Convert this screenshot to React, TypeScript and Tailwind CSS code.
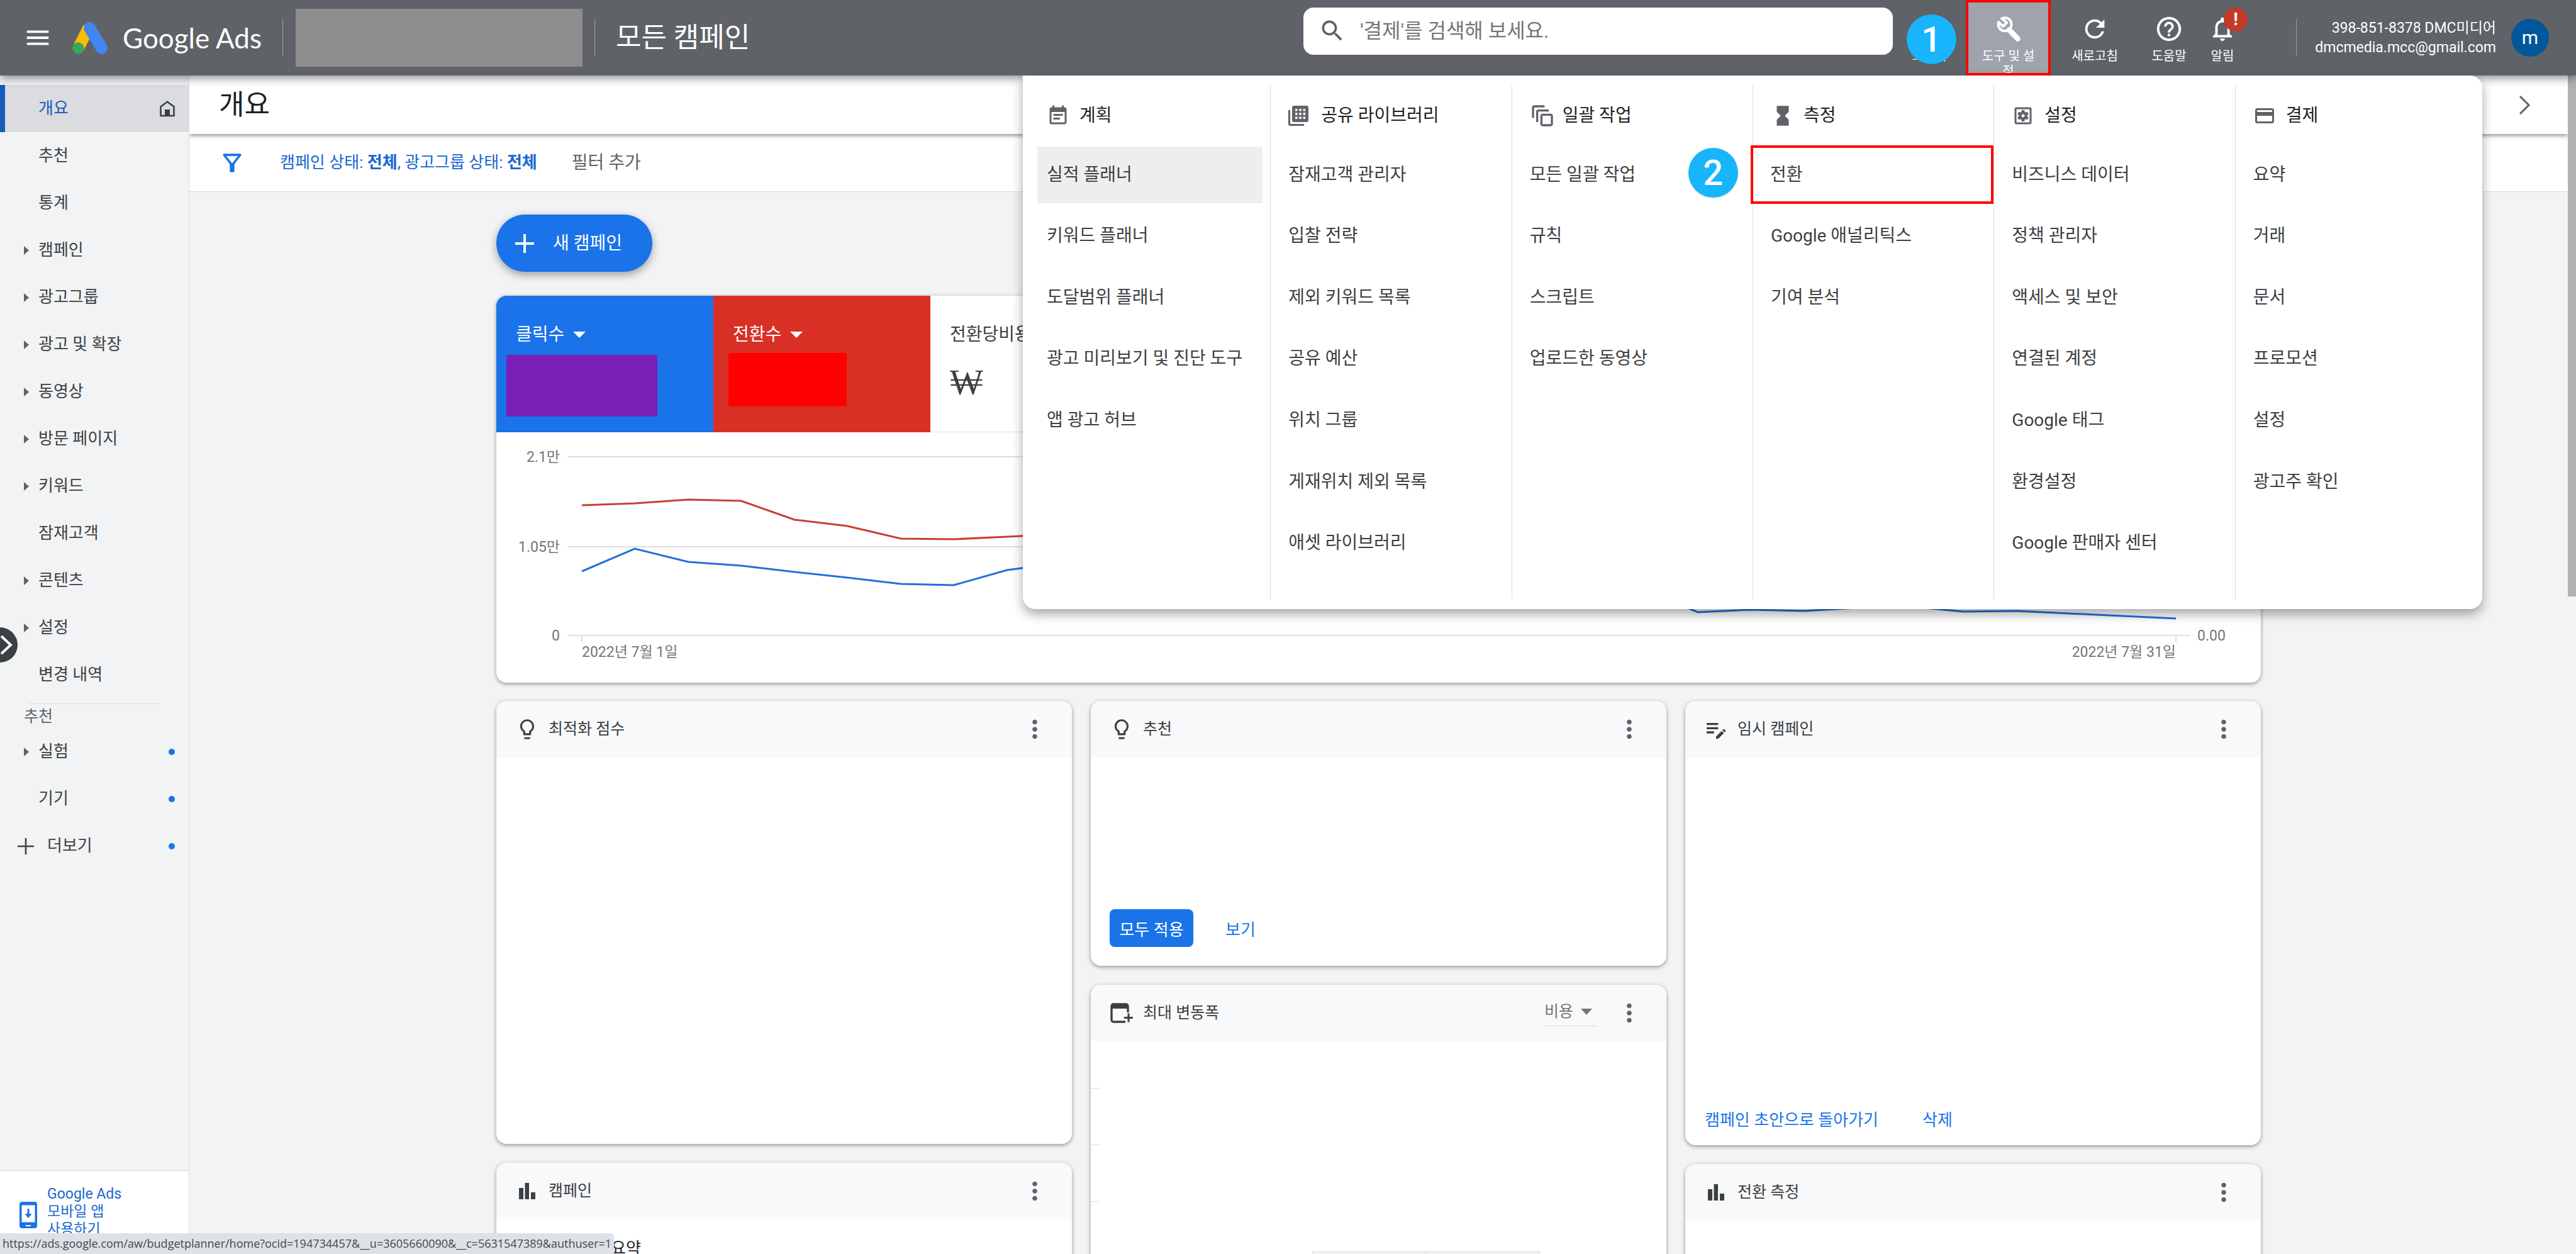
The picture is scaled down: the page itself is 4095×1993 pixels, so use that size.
import React from "react";
import {
  MdCreditCard,
  MdEditNote,
  MdEventNote,
  MdHelpOutline,
  MdHourglassFull,
  MdMenu,
  MdMoreVert,
  MdNotificationsNone,
  MdOutlineAutoAwesomeMotion,
  MdOutlineFilterAlt,
  MdOutlineLightbulb,
  MdOutlineSettingsApplications,
  MdRefresh,
  MdSearch,
} from "react-icons/md";

type Item = { label: string; caret?: boolean };

const navItems: Item[] = [
  { label: "추천" },
  { label: "통계" },
  { label: "캠페인", caret: true },
  { label: "광고그룹", caret: true },
  { label: "광고 및 확장", caret: true },
  { label: "동영상", caret: true },
  { label: "방문 페이지", caret: true },
  { label: "키워드", caret: true },
  { label: "잠재고객" },
  { label: "콘텐츠", caret: true },
  { label: "설정", caret: true },
  { label: "변경 내역" },
];

function LibraryIcon() {
  return (
    <svg viewBox="0 0 32 32" className="size-8" fill="currentColor" aria-hidden="true">
      <path
        fillRule="evenodd"
        d="M9 0h20a3 3 0 0 1 3 3v20a3 3 0 0 1-3 3H9a3 3 0 0 1-3-3V3a3 3 0 0 1 3-3zM11 5v3.500h3.500V5zm6.300 0v3.500h3.500V5zm6.300 0v3.500h3.500V5zM11 11.300v3.500h3.500v-3.500zm6.300 0v3.500h3.500v-3.500zm6.300 0v3.500h3.500v-3.500zM11 17.600v3.500h3.500v-3.500zm6.300 0v3.500h3.500v-3.500zm6.300 0v3.500h3.500v-3.500z"
      />
      <path d="M0 7h3v22h22v3H3a3 3 0 0 1-3-3z" />
    </svg>
  );
}

function WrenchIcon() {
  return (
    <svg viewBox="0 0 38 40" className="h-[40px] w-[38px]" fill="none" stroke="currentColor" aria-hidden="true">
      <path d="M8 3.500a10.500 10.500 0 1 1-4.800 5.500l7 7 6-6z" strokeWidth="4" strokeLinejoin="round" />
      <path d="M20 21.500l13.500 14" strokeWidth="8.500" strokeLinecap="round" />
    </svg>
  );
}

function PlusIcon({ className, thickness }: { className: string; thickness: number }) {
  return (
    <svg viewBox="0 0 30 30" className={className} fill="none" stroke="currentColor" strokeWidth={thickness} aria-hidden="true">
      <path d="M15 0v30M0 15h30" />
    </svg>
  );
}

function HomeIcon() {
  return (
    <svg viewBox="0 0 26 26" className="size-[26px]" aria-hidden="true">
      <path d="M2.500 24V9.500L13 1.800 23.500 9.500V24z" fill="none" stroke="#3c4043" strokeWidth="2.600" />
      <path d="M9 14h8v10H9z" fill="#3c4043" />
    </svg>
  );
}

function BarsIcon() {
  return (
    <svg viewBox="0 0 26 26" className="size-[26px]" fill="currentColor" aria-hidden="true">
      <path d="M0 8h7v18H0zM9.500 0h6.500v26H9.500zM19 15h7v11h-7z" />
    </svg>
  );
}

function WindowPlusIcon() {
  return (
    <svg viewBox="0 0 36 34" className="h-[34px] w-[36px]" fill="none" aria-hidden="true">
      <path d="M24 31H5a3 3 0 0 1-3-3V6a3 3 0 0 1 3-3h20a3 3 0 0 1 3 3v10" stroke="#3c4043" strokeWidth="3.400" />
      <path d="M1 3h28v7H1z" fill="#3c4043" />
      <path d="M22 24.500H36M29 17.500V31.500" stroke="#3c4043" strokeWidth="3" />
    </svg>
  );
}

function PhoneIcon() {
  return (
    <svg viewBox="0 0 28 42" className="h-[42px] w-[28px] shrink-0" aria-hidden="true">
      <rect width="28" height="42" rx="4" fill="#1a73e8" />
      <rect x="3.500" y="5.500" width="21" height="27" fill="#fff" />
      <path d="M12.500 11h3v8h4L14 26l-5.500-7h4z" fill="#1a73e8" />
      <path d="M10 37h8v2h-8z" fill="#fff" />
    </svg>
  );
}

function AdsLogo() {
  return (
    <svg viewBox="0 0 56 51" className="h-[51px] w-[56px]" aria-hidden="true">
      <path d="M26 8.500 9.500 41.500" stroke="#fbbc04" strokeWidth="18.500" />
      <path d="M27.500 9.500 46.500 41.500" stroke="#4285f4" strokeWidth="18.500" strokeLinecap="round" />
      <circle cx="9.300" cy="41.500" r="9.300" fill="#34a853" />
    </svg>
  );
}

const menuColumns = [
  {
    title: "계획",
    icon: <MdEventNote className="size-9" />,
    items: ["실적 플래너", "키워드 플래너", "도달범위 플래너", "광고 미리보기 및 진단 도구", "앱 광고 허브"],
  },
  {
    title: "공유 라이브러리",
    icon: <LibraryIcon />,
    items: ["잠재고객 관리자", "입찰 전략", "제외 키워드 목록", "공유 예산", "위치 그룹", "게재위치 제외 목록", "애셋 라이브러리"],
  },
  {
    title: "일괄 작업",
    icon: <MdOutlineAutoAwesomeMotion className="size-10" />,
    items: ["모든 일괄 작업", "규칙", "스크립트", "업로드한 동영상"],
  },
  {
    title: "측정",
    icon: <MdHourglassFull className="size-[38px]" />,
    items: ["전환", "Google 애널리틱스", "기여 분석"],
  },
  {
    title: "설정",
    icon: <MdOutlineSettingsApplications className="size-9" />,
    items: ["비즈니스 데이터", "정책 관리자", "액세스 및 보안", "연결된 계정", "Google 태그", "환경설정", "Google 판매자 센터"],
  },
  {
    title: "결제",
    icon: <MdCreditCard className="size-9" />,
    items: ["요약", "거래", "문서", "프로모션", "설정", "광고주 확인"],
  },
];

function StepBadge({ n, className }: { n: number; className: string }) {
  return (
    <span
      className={
        "absolute z-10 flex size-[79px] items-center justify-center rounded-full bg-[#18b5fd] text-[56px] leading-none font-medium text-white shadow " +
        className
      }
    >
      {n}
    </span>
  );
}

function ToolsMenu() {
  return (
    <nav
      aria-label="도구 및 설정"
      className="absolute top-full right-[149px] z-30 grid w-[2320px] grid-cols-6 rounded-[20px] rounded-tl-none bg-white px-[10px] py-[15px] text-[28px] text-[#3c4043] shadow-[0_8px_18px_rgba(0,0,0,0.35)]"
    >
      {menuColumns.map((col, c) => (
        <section key={col.title} className={c === 0 ? "h-[818px]" : "h-[818px] border-l border-[#dadce0]"}>
          <h2 className="flex h-[94px] items-center pt-[3px] pl-[28px] text-[#202124]">
            <span className="flex w-[52px] items-center text-[#5f6368]">{col.icon}</span>
            {col.title}
          </h2>
          <ul className="grid h-[683px] grid-rows-7">
            {col.items.map((item, i) => {
              const marked = c === 3 && i === 0;
              return (
                <li key={item} className="relative flex items-center">
                  {marked && <StepBadge n={2} className="top-[6px] -left-[103px]" />}
                  <a
                    href="#"
                    className={
                      marked
                        ? "-ml-[4px] flex h-[93px] flex-1 items-center border-4 border-[#f00] pl-[27px]"
                        : c === 0 && i === 0
                          ? "mr-[12px] ml-[13px] flex h-[90px] flex-1 items-center bg-[#eeeeee] pl-[15px]"
                          : "flex h-[90px] flex-1 items-center pl-[28px] whitespace-nowrap"
                    }
                  >
                    {item}
                  </a>
                </li>
              );
            })}
          </ul>
        </section>
      ))}
    </nav>
  );
}

function HeaderButton({ label, icon, className }: { label: string; icon: React.ReactNode; className: string }) {
  return (
    <button type="button" className={"relative flex h-full flex-col items-center pt-[23px] text-[20px] leading-[24px] " + className}>
      <span className="flex h-[46px] items-center">{icon}</span>
      <span className="mt-[8px]">{label}</span>
    </button>
  );
}

function Header() {
  return (
    <header className="relative z-20 flex h-[120px] shrink-0 items-center bg-[#5f6368] text-white shadow-[0_4px_14px_rgba(0,0,0,0.45)]">
      <button type="button" aria-label="메뉴" className="ml-[37px]">
        <MdMenu className="size-[46px]" />
      </button>
      <a href="#" className="ml-[32px] flex items-center gap-6">
        <AdsLogo />
        <span className="font-[Lato] text-[44px] leading-none">Google Ads</span>
      </a>
      <div className="ml-[33px] h-[60px] w-px bg-[#9aa0a6]" />
      <div className="ml-[20px] h-[92px] w-[456px] bg-[#8e8e8e]" />
      <div className="ml-[19px] h-[60px] w-px bg-[#9aa0a6]" />
      <h1 className="ml-[33px] text-[44px] leading-none">모든 캠페인</h1>
      <div className="flex-1" />
      <label className="mb-[22px] flex h-[75px] w-[937px] items-center rounded-[16px] bg-white text-[#5f6368]">
        <MdSearch className="ml-[24px] size-[44px]" />
        <input
          type="search"
          aria-label="검색"
          placeholder="'결제'를 검색해 보세요."
          className="ml-[22px] flex-1 bg-transparent text-[32px] outline-none placeholder:text-[#757575]"
        />
      </label>
      <div className="relative h-full">
        <HeaderButton label="보고서" icon={<BarsIcon />} className="w-[116px]" />
        <StepBadge n={1} className="top-[23px] left-[22px]" />
      </div>
      <button
        type="button"
        className="flex h-full w-[135px] flex-col items-center overflow-hidden border-4 border-[#f00] bg-[#9fa3ab] px-4 pt-[19px] text-[20px] leading-[24px]"
      >
        <span className="flex h-[46px] shrink-0 items-center">
          <WrenchIcon />
        </span>
        <span className="mt-[8px]">도구 및 설정</span>
      </button>
      <HeaderButton label="새로고침" icon={<MdRefresh className="size-[46px]" />} className="w-[140px]" />
      <HeaderButton label="도움말" icon={<MdHelpOutline className="size-[46px]" />} className="w-[96px]" />
      <HeaderButton
        label="알림"
        icon={
          <>
            <MdNotificationsNone className="size-[46px]" />
            <span className="absolute top-[12px] left-[39px] flex size-[38px] items-center justify-center rounded-full bg-[#c5392a] text-[28px] font-bold">
              !
            </span>
          </>
        }
        className="w-[74px]"
      />
      <div className="ml-[80px] h-[60px] w-px bg-[#9aa0a6]" />
      <div className="w-[317px] text-right text-[23px] leading-[31px] whitespace-nowrap">
        <p>398-851-8378 DMC미디어</p>
        <p>dmcmedia.mcc@gmail.com</p>
      </div>
      <button
        type="button"
        aria-label="계정"
        className="mr-[43px] ml-[24px] flex size-[60px] items-center justify-center rounded-full bg-[#00579b] text-[30px] leading-none"
      >
        m
      </button>
      <ToolsMenu />
    </header>
  );
}

function Caret() {
  return (
    <svg viewBox="0 0 8 14" className="h-[14px] w-[8px]" fill="#5f6368" aria-hidden="true">
      <path d="M0 0l8 7-8 7z" />
    </svg>
  );
}

function NavRow({ label, caret, dot }: { label: string; caret?: boolean; dot?: boolean }) {
  return (
    <a href="#" className="flex h-[75px] items-center pr-[22px] pl-[38px]">
      <span className="w-[23px]">{caret && <Caret />}</span>
      <span className="flex-1">{label}</span>
      {dot && <span className="size-[10px] rounded-full bg-[#1a73e8]" />}
    </a>
  );
}

function Sidebar() {
  return (
    <aside className="relative flex w-[301px] shrink-0 flex-col border-r border-[#dadce0] text-[26px] text-[#3c4043]">
      <nav className="pt-[15px]">
        <a href="#" className="flex h-[75px] items-center border-l-8 border-[#185abc] bg-[#dadce0] pr-[21px] pl-[53px] text-[#185abc]">
          <span className="flex-1">개요</span>
          <HomeIcon />
        </a>
        {navItems.map((it) => (
          <NavRow key={it.label} label={it.label} caret={it.caret} />
        ))}
        <div className="mt-[8px] mr-[47px] ml-[45px] border-t border-[#dadce0]" />
        <h2 className="pt-[2px] pl-[38px] text-[25px] leading-[36px] text-[#5f6368]">추천</h2>
        <NavRow label="실험" caret dot />
        <NavRow label="기기" dot />
        <a href="#" className="flex h-[75px] items-center pr-[22px] pl-[28px]">
          <PlusIcon className="size-[26px]" thickness={3} />
          <span className="ml-[21px] flex-1">더보기</span>
          <span className="size-[10px] rounded-full bg-[#1a73e8]" />
        </a>
      </nav>
      <button
        type="button"
        aria-label="탐색 메뉴 펼치기"
        className="absolute top-[877px] left-0 flex h-[56px] w-[28px] items-center rounded-r-full bg-[#3c4043]"
      >
        <svg viewBox="0 0 20 32" className="h-[32px] w-[20px]" fill="none" stroke="#fff" strokeWidth="4" aria-hidden="true">
          <path d="M2 2l15 14L2 30" />
        </svg>
      </button>
      <a
        href="#"
        className="mt-auto flex h-[133px] shrink-0 gap-[16px] overflow-hidden border-t border-[#dadce0] bg-white pt-[23px] pl-[31px] text-[23px] leading-[28px] text-[#1967d2]"
      >
        <span className="pt-[26px]">
          <PhoneIcon />
        </span>
        <span className="w-[130px]">
          Google Ads
          <br />
          모바일 앱
          <br />
          사용하기
        </span>
      </a>
    </aside>
  );
}

const redSeries = [116, 113, 107, 109, 139, 149, 169, 170, 166, 162, 158, 150, 146, 152, 160, 168, 176, 180, 184, 188, 192, 204, 210, 214, 206, 200, 208, 214, 220, 226, 232];
const blueSeries = [221, 185, 206, 212, 222, 231, 241, 243, 219, 208, 200, 196, 204, 212, 220, 226, 232, 236, 224, 216, 250, 286, 282, 284, 279, 277, 285, 284, 288, 292, 296];

function toPoints(ys: number[]) {
  return ys.map((y, i) => `${136 + Math.round(i * 84.47)},${y}`).join(" ");
}

function Chart() {
  return (
    <svg viewBox="0 0 2805 398" className="block w-full" role="img" aria-label="클릭수 및 전환수 추이">
      <g stroke="#e0e0e0" strokeWidth="2">
        <path d="M113 39H2692M113 182H2692M113 323H2692M136 323v11M2670 323v11" />
      </g>
      <g fill="none" strokeWidth="3">
        <polyline points={toPoints(redSeries)} stroke="#c93f33" />
        <polyline points={toPoints(blueSeries)} stroke="#2170dc" />
      </g>
      <g fill="#757575" fontSize="23">
        <g textAnchor="end">
          <text x="101" y="47">2.1만</text>
          <text x="101" y="190">1.05만</text>
          <text x="101" y="331">0</text>
          <text x="2670" y="357">2022년 7월 31일</text>
        </g>
        <text x="136" y="357">2022년 7월 1일</text>
        <text x="2704" y="331">0.00</text>
      </g>
    </svg>
  );
}

function Triangle() {
  return (
    <svg viewBox="0 0 20 10" className="h-[10px] w-[20px]" fill="currentColor" aria-hidden="true">
      <path d="M0 0h20L10 10z" />
    </svg>
  );
}

const cardClass = "overflow-hidden rounded-[16px] bg-white shadow-[0_2px_6px_rgba(0,0,0,0.4)]";

function Performance() {
  return (
    <section className={cardClass}>
      <div className="flex h-[217px] text-[28px]">
        <div className="w-[345px] bg-[#1a73e8] pt-[41px] text-white">
          <button type="button" className="ml-[31px] flex h-[42px] items-center gap-[14px]">
            클릭수 <Triangle />
          </button>
          <div className="mt-[11px] ml-[16px] h-[98px] w-[240px] bg-[#781fb7]" />
        </div>
        <div className="w-[345px] bg-[#d93025] pt-[41px] text-white">
          <button type="button" className="ml-[31px] flex h-[42px] items-center gap-[14px]">
            전환수 <Triangle />
          </button>
          <div className="mt-[8px] ml-[24px] h-[85px] w-[188px] bg-[#ff0000]" />
        </div>
        <div className="flex-1 border-b border-[#e0e0e0] pt-[41px] pl-[31px] text-[#3c4043]">
          <button type="button" className="flex h-[42px] items-center gap-[14px]">
            전환당비용 <Triangle />
          </button>
          <p className="mt-[20px] font-['Open_Sans'] text-[56px] leading-[64px]">₩</p>
        </div>
      </div>
      <Chart />
    </section>
  );
}

function Card({
  title,
  icon,
  className = "",
  extra,
  children,
}: {
  title: string;
  icon: React.ReactNode;
  className?: string;
  extra?: React.ReactNode;
  children?: React.ReactNode;
}) {
  return (
    <section className={"relative flex shrink-0 flex-col " + cardClass + " " + className}>
      <div className="flex h-[90px] shrink-0 items-center bg-[#f8f9fa] pr-[36px] pl-[29px] text-[#3c4043]">
        <span className="flex w-[40px] justify-center">{icon}</span>
        <h2 className="ml-[14px] flex-1 text-[25px]">{title}</h2>
        {extra}
        <button type="button" aria-label={title + " 옵션 더보기"}>
          <MdMoreVert className="size-[46px] text-[#5f6368]" />
        </button>
      </div>
      {children}
    </section>
  );
}

const bulb = <MdOutlineLightbulb className="size-[38px]" />;

function Dashboard() {
  return (
    <div className="grid grid-cols-3 items-start gap-[30px] text-[26px]">
      <div className="flex flex-col gap-[30px]">
        <Card title="최적화 점수" icon={bulb} className="h-[704px]" />
        <Card title="캠페인" icon={<BarsIcon />} className="h-[704px]">
          <p className="mt-[26px] pl-[182px] text-[26px] leading-[40px] text-[#202124]">요약</p>
        </Card>
      </div>
      <div className="flex flex-col gap-[30px]">
        <Card title="추천" icon={bulb} className="h-[421px]">
          <div className="mt-auto mb-[30px] ml-[30px] flex items-center">
            <button type="button" className="h-[60px] w-[133px] rounded-lg bg-[#1a73e8] pt-[6px] text-white">
              모두 적용
            </button>
            <button type="button" className="ml-[51px] pt-[6px] text-[#1a73e8]">
              보기
            </button>
          </div>
        </Card>
        <Card
          title="최대 변동폭"
          icon={<WindowPlusIcon />}
          className="h-[704px]"
          extra={
            <button
              type="button"
              className="mr-[28px] flex h-[42px] w-[84px] items-center justify-between border-b border-[#dadce0] pr-[8px] pb-1 text-[25px] text-[#757575]"
            >
              비용
              <svg viewBox="0 0 18 10" className="h-[10px] w-[18px]" fill="currentColor" aria-hidden="true">
                <path d="M0 0h18L9 10z" />
              </svg>
            </button>
          }
        >
          <div className="mt-[74px] flex flex-col gap-[89px]">
            <div className="h-px w-[14px] bg-[#dadce0]" />
            <div className="h-px w-[14px] bg-[#dadce0]" />
            <div className="h-px w-[14px] bg-[#dadce0]" />
          </div>
          <div className="mt-[79px] ml-[352px] flex h-[60px] w-[362px] shrink-0 border border-[#dadce0] bg-[#f1f3f4]">
            <div className="w-1/2 border-r border-[#dadce0]" />
          </div>
        </Card>
      </div>
      <div className="flex flex-col gap-[30px]">
        <Card title="임시 캠페인" icon={<MdEditNote className="size-[46px]" />} className="h-[706px]">
          <div className="mt-auto mb-[20px] ml-[31px] flex gap-[70px] leading-[40px] text-[#1a73e8]">
            <button type="button">캠페인 초안으로 돌아가기</button>
            <button type="button">삭제</button>
          </div>
        </Card>
        <Card title="전환 측정" icon={<BarsIcon />} className="h-[704px]" />
      </div>
    </div>
  );
}

export default function App() {
  return (
    <div className="flex h-screen flex-col overflow-hidden bg-[#f1f3f4] font-[Roboto,'Noto_Sans_CJK_KR',sans-serif]">
      <Header />
      <div className="flex min-h-0 flex-1">
        <Sidebar />
        <main className="min-w-0 flex-1 overflow-hidden">
          <div className="relative z-10 flex h-[93px] items-center justify-between bg-white pr-[58px] pl-[47px] shadow-[0_3px_6px_rgba(0,0,0,0.4)]">
            <h2 className="text-[44px] leading-none text-[#202124]">개요</h2>
            <button type="button" aria-label="다음">
              <svg viewBox="0 0 20 30" className="h-[30px] w-[20px]" fill="none" stroke="#5f6368" strokeWidth="3" aria-hidden="true">
                <path d="M2 1l14 14L2 29" />
              </svg>
            </button>
          </div>
          <div className="flex h-[92px] items-center border-b border-[#dadce0] bg-white pl-[46px] text-[26px] text-[#1967d2]">
            <MdOutlineFilterAlt className="size-[44px] text-[#1a73e8]" />
            <button type="button" className="ml-[54px]">
              캠페인 상태: <b>전체</b>, 광고그룹 상태: <b>전체</b>
            </button>
            <button type="button" className="ml-[55px] text-[28px] text-[#5f6368]">
              필터 추가
            </button>
          </div>
          <div className="mx-auto flex w-full max-w-[2805px] flex-col pt-[36px]">
            <button
              type="button"
              className="mb-[38px] flex h-[91px] w-[248px] items-center rounded-full bg-[#1a73e8] pl-[30px] text-[28px] text-white shadow-[0_5px_14px_rgba(0,0,0,0.35)]"
            >
              <PlusIcon className="mr-[30px] size-[30px]" thickness={4} />새 캠페인
            </button>
            <Performance />
            <div className="h-[29px]" />
            <Dashboard />
          </div>
        </main>
        <div className="w-[13px] shrink-0">
          <div className="h-[828px] bg-[#b0b1b3]" />
        </div>
      </div>
      <div className="fixed bottom-0 left-0 z-40 flex h-[33px] items-center rounded-tr-[6px] bg-[#dee1e6] px-1 font-['Open_Sans'] text-[18px] text-[#45484d]">
        https://ads.google.com/aw/budgetplanner/home?ocid=194734457&amp;__u=3605660090&amp;__c=5631547389&amp;authuser=1
      </div>
    </div>
  );
}
